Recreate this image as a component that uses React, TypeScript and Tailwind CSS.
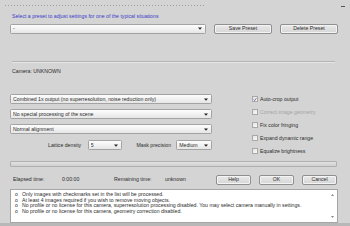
import React from "react";

const Arrow = () => (
  <svg width="4" height="3" viewBox="0 0 4 3" className="shrink-0">
    <path d="M0 0.5 L4 0.5 L2 2.8 Z" fill="#222" />
  </svg>
);

function Combo({ text, className = "" }: { text: string; className?: string }) {
  return (
    <div
      className={`h-[10px] border border-[#a3a3a3] rounded-[1.5px] bg-gradient-to-b from-[#fdfdfd] to-[#e6e6e6] flex items-center pl-[2px] pr-[3px] ${className}`}
    >
      <span className="flex-1 whitespace-nowrap overflow-hidden leading-none">{text}</span>
      <Arrow />
    </div>
  );
}

function Btn({ text, className = "" }: { text: string; className?: string }) {
  return (
    <div
      className={`h-[10px] border border-[#8f8f8f] rounded-[2px] bg-gradient-to-b from-[#e9e9e9] to-[#d6d6d6] shadow-[inset_0_0_0_1px_#f4f4f4] flex items-center justify-center leading-none ${className}`}
    >
      {text}
    </div>
  );
}

function Check({ label, checked = false, disabled = false }: { label: string; checked?: boolean; disabled?: boolean }) {
  return (
    <div className="h-[6px] flex items-center gap-[2px]">
      <div className="w-[6px] h-[6px] border border-[#a8a8a8] bg-gradient-to-br from-[#e4e4e4] to-[#fafafa] flex items-center justify-center">
        {checked && (
          <svg width="5" height="5" viewBox="0 0 5 5">
            <path d="M0.8 2.6 L2 3.8 L4.3 0.8" stroke="#3a3a8a" strokeWidth="0.9" fill="none" />
          </svg>
        )}
      </div>
      <span className={`leading-none whitespace-nowrap ${disabled ? "text-[#a4a4a4]" : ""}`}>{label}</span>
    </div>
  );
}

export default function App() {
  return (
    <div className="w-[350px] h-[226px] bg-[#d4d4d4] text-[#2c2c2c] text-[5.2px] font-['Liberation_Sans',Arial,sans-serif] flex flex-col overflow-hidden">
      {/* grip */}
      <div className="h-[10px] flex items-start pt-[4px] pl-[4px] pr-[5px]">
        <div className="w-[202px] h-[4px] bg-[radial-gradient(circle,#9c9c9c_0.7px,transparent_0.9px)] bg-[length:3px_3px]" />
        <div className="flex-1" />
        <div className="w-[4px] h-[1px] bg-[#555] mt-[2px]" />
      </div>
      {/* title */}
      <div className="h-[14px] flex items-center pl-[12px] text-[#3b3bc8] leading-none">
        Select a preset to adjust settings for one of the typical situations
      </div>
      {/* preset row */}
      <div className="flex items-center pl-[10px]">
        <Combo text="-" className="w-[196px]" />
        <Btn text="Save Preset" className="w-[58px] ml-[8px]" />
        <Btn text="Delete Preset" className="w-[58px] ml-[8px]" />
      </div>
      {/* separator */}
      <div className="mt-[27px] ml-[12px] w-[323px] h-[1px] bg-[#b4b4b4] shadow-[0_1px_0_#e6e6e6]" />
      <div className="h-[20px] flex items-center pl-[12px] leading-none">Camera: UNKNOWN</div>
      {/* middle */}
      <div className="mt-[13px] flex">
        <div className="flex flex-col gap-[5px] pl-[10px] w-[212px]">
          <Combo text="Combined 1x output (no superresolution, noise reduction only)" />
          <Combo text="No special processing of the scene" />
          <Combo text="Normal alignment" />
          <div className="flex items-center mt-[1px]">
            <span className="ml-[38px] w-[40px] leading-none">Lattice density</span>
            <Combo text="5" className="w-[34px]" />
            <span className="ml-[15px] w-[40px] leading-none">Mask precision</span>
            <Combo text="Medium" className="w-[36px]" />
          </div>
        </div>
        <div className="flex flex-col gap-[7px] ml-[40px] pt-[2px]">
          <Check label="Auto-crop output" checked />
          <Check label="Correct image geometry" disabled />
          <Check label="Fix color fringing" />
          <Check label="Expand dynamic range" />
          <Check label="Equalize brightness" />
        </div>
      </div>
      {/* progress */}
      <div className="mt-[7px] ml-[10px] w-[327px] h-[6px] border border-[#b0b0b0] rounded-[1px] bg-gradient-to-b from-[#e2e2e2] to-[#d0d0d0]" />
      {/* time row */}
      <div className="mt-[8px] h-[9px] flex items-center">
        <span className="ml-[13px] w-[49px] leading-none">Elapsed time:</span>
        <span className="w-[52px] leading-none">0:00:00</span>
        <span className="w-[51px] leading-none">Remaining time:</span>
        <span className="w-[51px] leading-none">unknown</span>
        <Btn text="Help" className="w-[35px]" />
        <Btn text="OK" className="w-[35px] ml-[8px]" />
        <Btn text="Cancel" className="w-[35px] ml-[8px]" />
      </div>
      {/* info box */}
      <div className="mt-[5px] ml-[10px] w-[328px] h-[34px] bg-white border border-[#a6a6a6] flex">
        <div className="flex-1 flex flex-col pt-[2px] leading-[5.4px]">
          {[
            "Only images with checkmarks set in the list will be processed.",
            "At least 4 images required if you wish to remove moving objects.",
            "No profile or no license for this camera, superresolution processing disabled. You may select camera manually in settings.",
            "No profile or no license for this camera, geometry correction disabled.",
          ].map((t) => (
            <div key={t} className="flex whitespace-nowrap">
              <span className="w-[11px] pl-[4px]">o</span>
              <span>{t}</span>
            </div>
          ))}
        </div>
        <div className="w-[9px] flex flex-col items-center justify-between py-[4px]">
          <svg width="3" height="2" viewBox="0 0 3 2"><path d="M0 2 L1.5 0 L3 2 Z" fill="#8a8a8a" /></svg>
          <svg width="3" height="2" viewBox="0 0 3 2"><path d="M0 0 L1.5 2 L3 0 Z" fill="#8a8a8a" /></svg>
        </div>
      </div>
      <div className="flex-1" />
      <div className="h-[3px] bg-[#b8b8b8]" />
    </div>
  );
}
